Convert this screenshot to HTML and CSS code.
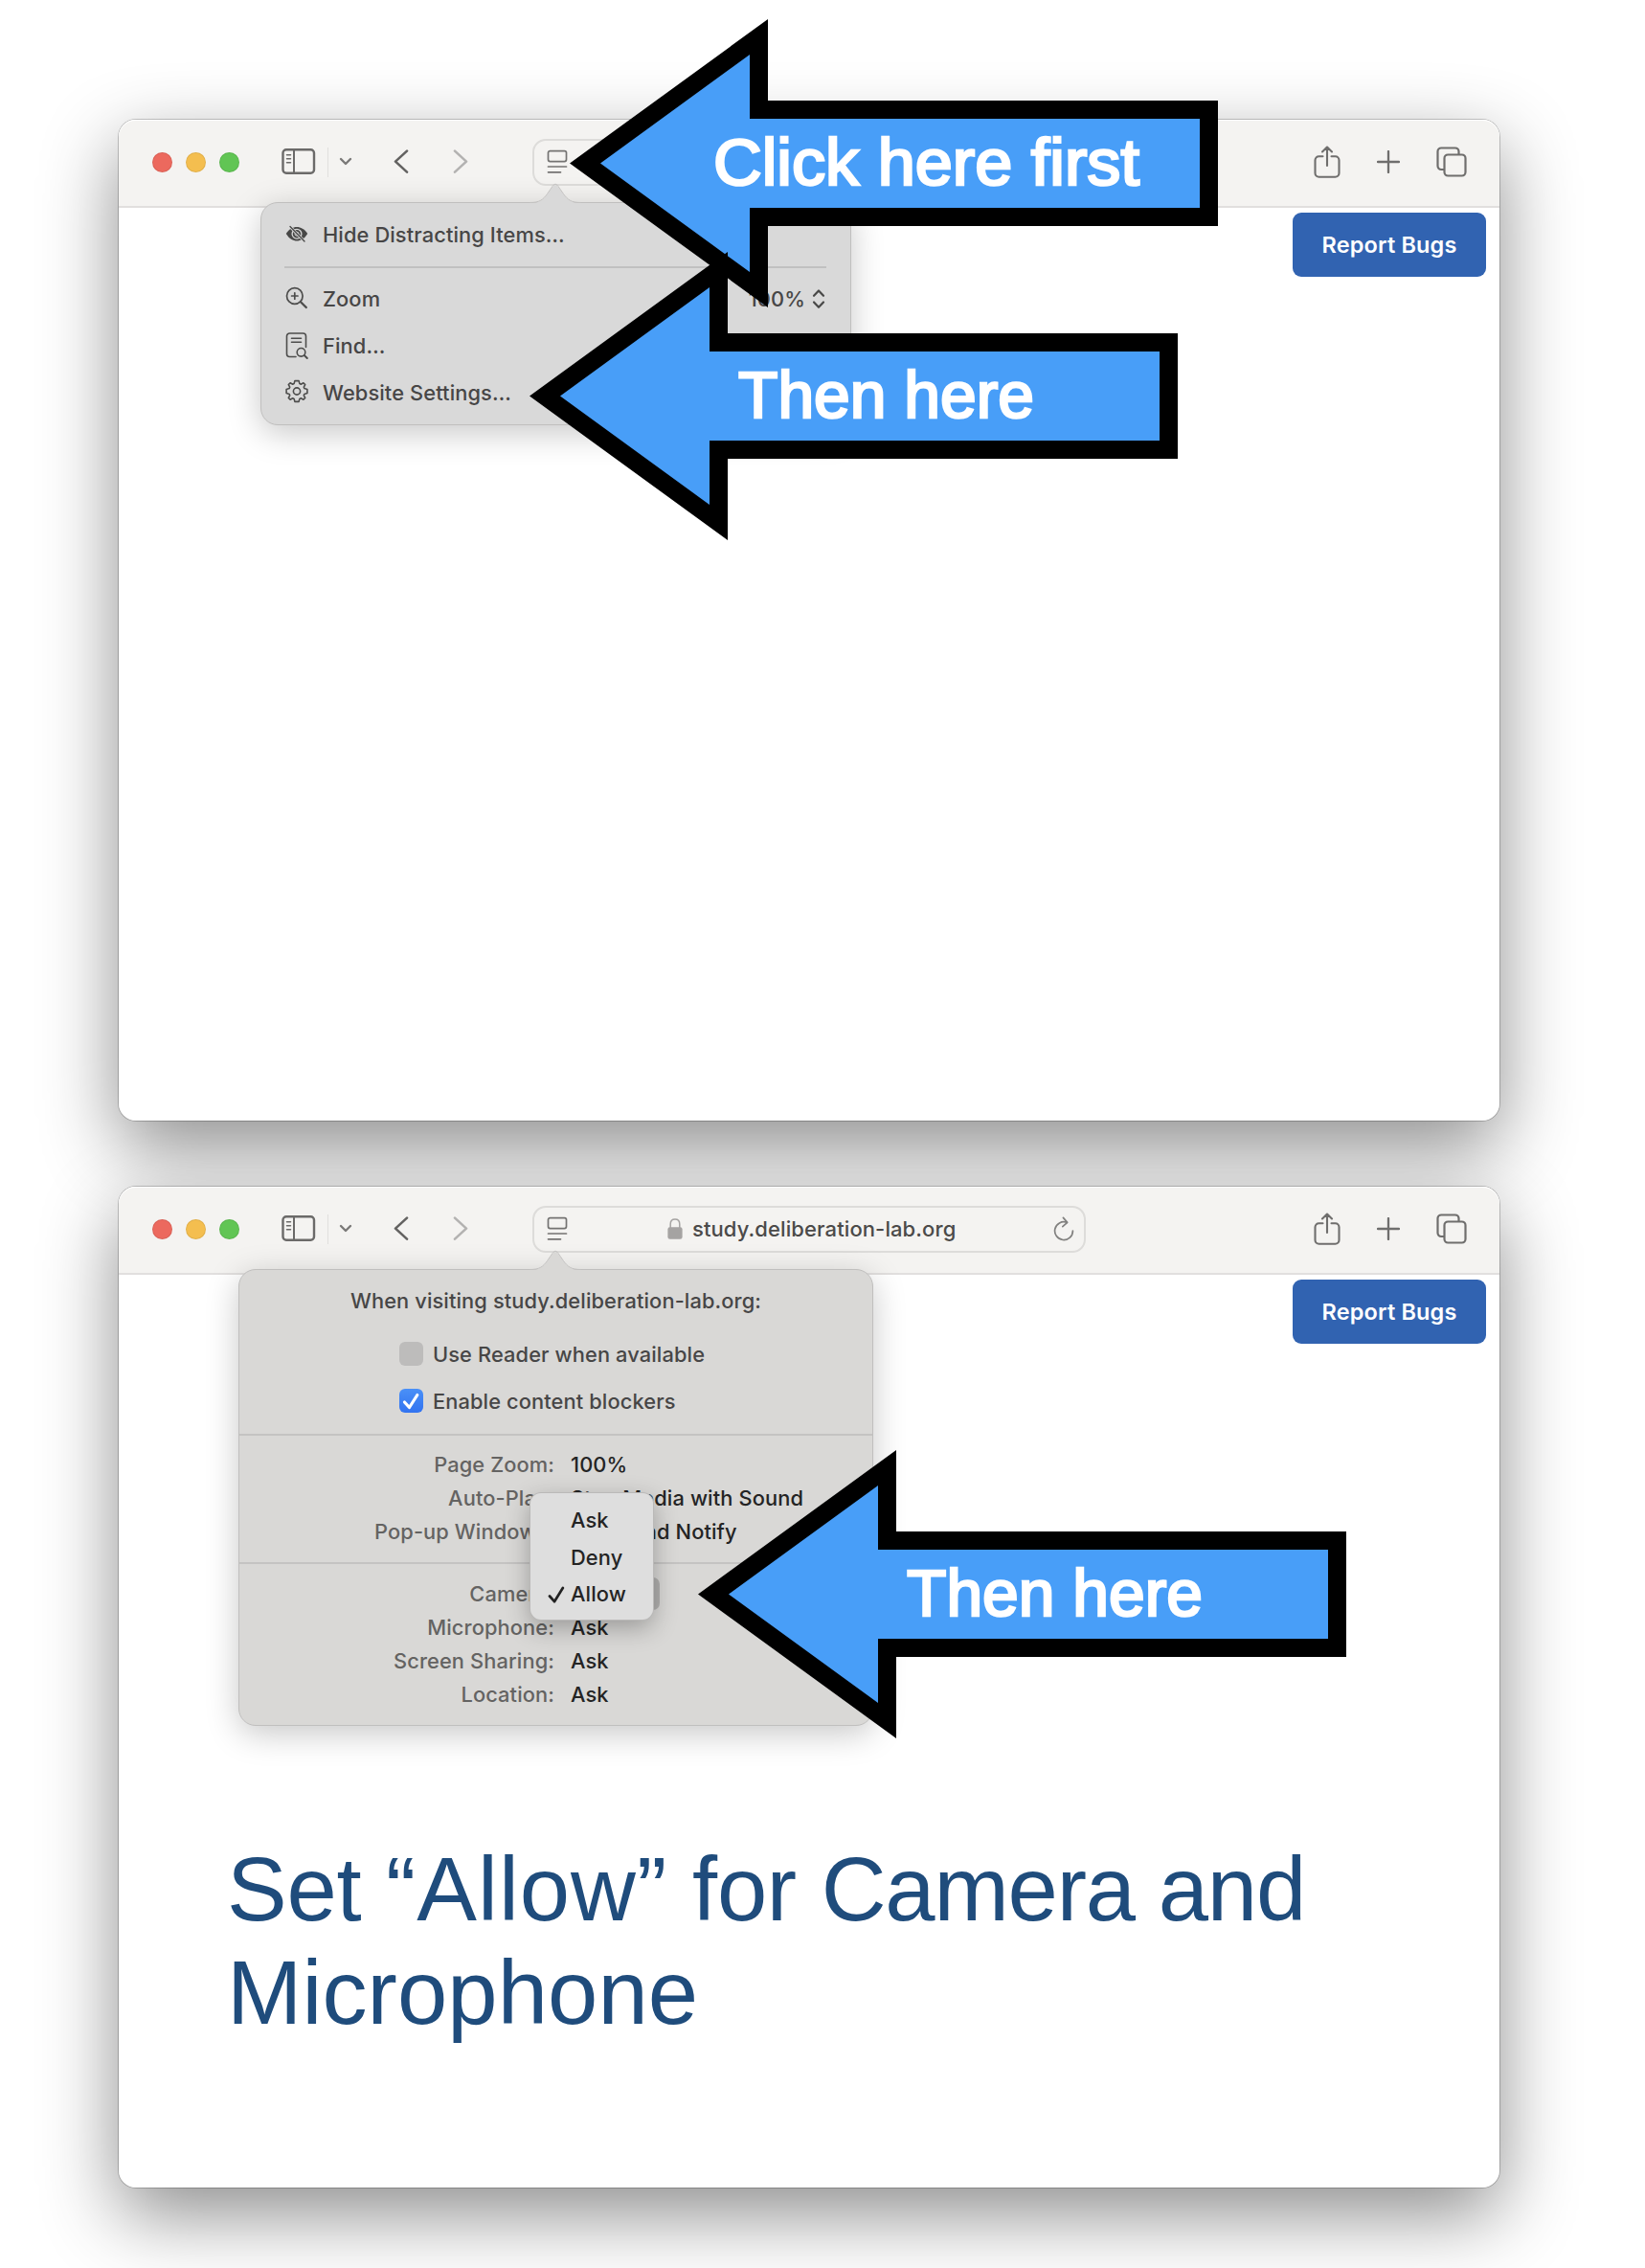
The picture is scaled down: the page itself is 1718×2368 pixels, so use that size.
FILE: index.html
```html
<!DOCTYPE html>
<html lang="en">
<head>
<meta charset="utf-8">
<title>Camera and microphone permissions</title>
<link rel="stylesheet" href="styles.css">
</head>
<body>
<svg class="defs" width="0" height="0" aria-hidden="true">
  <symbol id="sidebar" viewBox="0 0 36 28"><g fill="none" stroke="#6b6a69"><rect x="1.5" y="1.2" width="32.500" height="24.500" rx="3.5" stroke-width="2.4"/><path d="M13 2v24" stroke-width="2"/><path d="M5.500 6.800h4M5.500 10.800h4M5.500 14.800h4" stroke-width="1.500" stroke-linecap="round"/></g></symbol>
  <symbol id="down" viewBox="0 0 14 10"><path d="M2 2l5 5 5-5" fill="none" stroke="#7a7978" stroke-width="2.4" stroke-linecap="round" stroke-linejoin="round"/></symbol>
  <symbol id="back" viewBox="0 0 16 26"><path d="M14 1.6L2 12.600l12 11" fill="none" stroke="currentColor" stroke-width="2.6" stroke-linecap="round" stroke-linejoin="round"/></symbol>
  <symbol id="reader" viewBox="0 0 22 26"><g fill="none" stroke="#747372" stroke-width="1.7" stroke-linecap="round"><rect x="1.5" y="1.6" width="19" height="11" rx="2"/><path d="M1.5 18h19M1.5 23.800h13"/></g></symbol>
  <symbol id="lock" viewBox="0 0 16 22"><path d="M3.2 10V6.2C3.2 3 5.200 1 8 1s4.800 2 4.800 5.200V10" fill="none" stroke="#a5a3a2" stroke-width="1.500"/><rect x=".4" y="9.200" width="15.200" height="12.600" rx="2.300" fill="#a5a3a2"/></symbol>
  <symbol id="reload" viewBox="0 0 22 26"><g fill="none" stroke="#81807f" stroke-width="1.700" stroke-linecap="round" stroke-linejoin="round"><path d="M14.200 6.300A9.400 9.400 0 1 0 20.400 15"/><path d="M10.400 1.400l4.300 5-4.900 4.300"/></g></symbol>
  <symbol id="share" viewBox="0 0 28 34"><g fill="none" stroke="#6f6e6d" stroke-width="2.100" stroke-linecap="round" stroke-linejoin="round"><path d="M9.500 11.200H5.500a4 4 0 0 0-4 4v13.600a4 4 0 0 0 4 4h17a4 4 0 0 0 4-4V15.200a4 4 0 0 0-4-4h-4M14 21V1.600M9 6.500l5-5 5 5"/></g></symbol>
  <symbol id="plus" viewBox="0 0 24 24"><path d="M12 1v22M1 12h22" stroke="#6f6e6d" stroke-width="2.300" stroke-linecap="round"/></symbol>
  <symbol id="tabs" viewBox="0 0 32 32"><g fill="none" stroke="#6f6e6d" stroke-width="2.200"><path d="M8.500 24H5.200A3.700 3.700 0 0 1 1.500 20.300V5.200A3.700 3.700 0 0 1 5.200 1.500h14.600a3.700 3.700 0 0 1 3.700 3.700v3.300"/><rect x="8.500" y="8.500" width="22" height="22" rx="3.700"/></g></symbol>
  <symbol id="tail" viewBox="0 0 54 23"><path d="M0 22C11 22 14 19 18.500 13L23 6.500C26 2 28 2 31 6.500l4.500 6.500C40 19 43 22 54 22v1H0z" fill="var(--pop)"/><path d="M0 21.500C11 21.500 14 18.500 18.500 12.500L23 6C26 1 28 1 31 6l4.500 6.500C40 18.500 43 21.500 54 21.500" fill="none" stroke="#c3c2c1"/></symbol>
</svg>

<main class="page">
  <section class="window">
    <header class="toolbar">
      <div class="lights"><i class="red"></i><i class="yellow"></i><i class="green"></i></div>
      <svg class="i-sidebar"><use href="#sidebar"/></svg>
      <span class="sep"></span>
      <svg class="i-down"><use href="#down"/></svg>
      <svg class="i-back"><use href="#back"/></svg>
      <svg class="i-fwd"><use href="#back"/></svg>
      <div class="address"><svg class="i-reader"><use href="#reader"/></svg></div>
      <div class="actions">
        <svg class="i-share"><use href="#share"/></svg>
        <svg class="i-plus"><use href="#plus"/></svg>
        <svg class="i-tabs"><use href="#tabs"/></svg>
      </div>
    </header>
    <div class="content"><button class="report">Report Bugs</button></div>

    <div class="popover menu">
      <svg class="tail"><use href="#tail"/></svg>
      <div class="item">
        <svg class="glyph" viewBox="0 0 24 28"><path d="M.8 13C4 8 8 6 12 6s8 2 11.200 7C20 18.300 16 20.500 12 20.500S4 18.300.8 13z" fill="#484847"/><circle cx="12" cy="13.200" r="4.900" fill="none" stroke="#d9d9d9" stroke-width="1.300"/><circle cx="12" cy="13.200" r="2" fill="none" stroke="#d9d9d9"/><path d="M5.500 6.200l14 14.300" stroke="#d9d9d9" stroke-width="2.800"/><path d="M5 5.500l15 15.500" stroke="#484847" stroke-width="1.300" stroke-linecap="round"/></svg>
        <span>Hide Distracting Items…</span>
      </div>
      <hr>
      <div class="item">
        <svg class="glyph" viewBox="0 0 24 28"><g fill="none" stroke="#4d4d4c" stroke-width="1.700" stroke-linecap="round"><circle cx="9.800" cy="11" r="8.300"/><path d="M9.800 7.800v6.400M6.600 11H13"/><path d="M16 17.200l5.800 5.800" stroke-width="2.300"/></g></svg>
        <span>Zoom</span>
        <span class="pct">100%</span>
        <svg class="i-updown" viewBox="0 0 14 22"><path d="M2 7.800L7 2.500l5 5.300M2 14.500l5 5.300 5-5.300" fill="none" stroke="#484847" stroke-width="2.200" stroke-linecap="round" stroke-linejoin="round"/></svg>
      </div>
      <div class="item">
        <svg class="glyph" viewBox="0 0 24 28"><g fill="none" stroke="#4d4d4c" stroke-width="1.600" stroke-linecap="round"><path d="M11 25.500H4.500A3 3 0 0 1 1.500 22.500V4a3 3 0 0 1 3-3h14a3 3 0 0 1 3 3v11.500M6.500 6.200h10M6.500 10.200h10"/><circle cx="16.500" cy="20.800" r="4.300"/><path d="M19.800 24l3 3" stroke-width="1.900"/></g></svg>
        <span>Find…</span>
      </div>
      <div class="item">
        <svg class="glyph" viewBox="0 0 24 28"><g fill="none" stroke="#4d4d4c" stroke-width="1.600" stroke-linejoin="round" transform="translate(12 12.500)"><circle r="3.600"/><path d="M-2.100-10.900H2.100L2.900-7.900 4.300-7.300 6.900-8.700 8.700-6.900 7.300-4.300 7.900-2.900 10.900-2.100V2.100L7.900 2.900 7.300 4.300 8.700 6.900 6.900 8.700 4.300 7.300 2.900 7.900 2.100 10.900H-2.100L-2.900 7.900-4.300 7.300-6.900 8.700-8.700 6.900-7.300 4.300-7.900 2.900-10.900 2.100V-2.100L-7.900-2.900-7.300-4.300-8.700-6.900-6.900-8.700-4.300-7.300-2.900-7.900z"/></g></svg>
        <span>Website Settings…</span>
      </div>
    </div>
  </section>

  <section class="window">
    <header class="toolbar">
      <div class="lights"><i class="red"></i><i class="yellow"></i><i class="green"></i></div>
      <svg class="i-sidebar"><use href="#sidebar"/></svg>
      <span class="sep"></span>
      <svg class="i-down"><use href="#down"/></svg>
      <svg class="i-back"><use href="#back"/></svg>
      <svg class="i-fwd"><use href="#back"/></svg>
      <div class="address">
        <svg class="i-reader"><use href="#reader"/></svg>
        <div class="url"><svg class="i-lock"><use href="#lock"/></svg><span>study.deliberation-lab.org</span></div>
        <svg class="i-reload"><use href="#reload"/></svg>
      </div>
      <div class="actions">
        <svg class="i-share"><use href="#share"/></svg>
        <svg class="i-plus"><use href="#plus"/></svg>
        <svg class="i-tabs"><use href="#tabs"/></svg>
      </div>
    </header>
    <div class="content">
      <button class="report">Report Bugs</button>
      <h1>Set <span class="quoted">“Allow”</span> for <span class="tight">Camera and</span><br><span class="loose">Microphone</span></h1>
    </div>

    <div class="popover settings">
      <svg class="tail"><use href="#tail"/></svg>
      <div class="visiting">When visiting study.deliberation-lab.org:</div>
      <div class="check"><i class="box"></i><span>Use Reader when available</span></div>
      <div class="check"><i class="box on"><svg viewBox="0 0 25 25"><path d="M5.500 14l5 5.500L18.800 6.500" fill="none" stroke="#fff" stroke-width="3.200" stroke-linecap="round" stroke-linejoin="round"/></svg></i><span>Enable content blockers</span></div>
      <dl class="group">
        <dt>Page Zoom:</dt><dd>100%</dd>
        <dt>Auto-Play:</dt><dd>Stop Media with Sound</dd>
        <dt>Pop-up Windows:</dt><dd>Block and Notify</dd>
      </dl>
      <dl class="group">
        <dt>Camera:</dt><dd class="select"></dd>
        <dt>Microphone:</dt><dd>Ask</dd>
        <dt>Screen Sharing:</dt><dd>Ask</dd>
        <dt>Location:</dt><dd>Ask</dd>
      </dl>
      <div class="choices">
        <span>Ask</span>
        <span>Deny</span>
        <span><svg viewBox="0 0 18 18"><path d="M2 10.500l5 5.700L15.800 2" fill="none" stroke="#222" stroke-width="2.700" stroke-linecap="round" stroke-linejoin="round"/></svg>Allow</span>
      </div>
    </div>
  </section>

  <svg class="arrow first" viewBox="0 0 678 302"><path d="M0 150.500L207 0v85h470v131H207v85z"/><path class="fill" d="M32 150.500L188 37v67h470v93H188v67z"/><text x="150" y="172.500" textLength="445" lengthAdjust="spacingAndGlyphs">Click here first</text></svg>
  <svg class="arrow second" viewBox="0 0 678 302"><path d="M0 150.500L207 0v85h470v131H207v85z"/><path class="fill" d="M32 150.500L188 37v67h470v93H188v67z"/><text x="218" y="172.500" textLength="309" lengthAdjust="spacingAndGlyphs">Then here</text></svg>
  <svg class="arrow third" viewBox="0 0 678 302"><path d="M0 150.500L207 0v85h470v131H207v85z"/><path class="fill" d="M32 150.500L188 37v67h470v93H188v67z"/><text x="218" y="172.500" textLength="309" lengthAdjust="spacingAndGlyphs">Then here</text></svg>
</main>
</body>
</html>
```
FILE: styles.css
```css
* { box-sizing: border-box; }
body { margin: 0; background: #fff; font-family: Inter, "Liberation Sans", sans-serif; font-size: 21.8px; font-weight: 450; letter-spacing: .12px; }
.defs { position: absolute; }
svg { display: block; flex: none; }

.page {
  position: relative;
  isolation: isolate;
  width: 1718px;
  height: 2368px;
  padding: 125px 152px 0 124px;
  overflow: hidden;
  display: flex;
  flex-direction: column;
  gap: 69px;
}

/* Browser window */
.window { position: relative; height: 1045px; border-radius: 18px; background: #fff; box-shadow: 0 0 0 1px rgba(0, 0, 0, .2); }
.window::before { content: ""; position: absolute; z-index: -1; inset: 0; border-radius: 18px; box-shadow: 0 28px 80px rgba(0, 0, 0, .45); }
.toolbar {
  height: 92px;
  padding: 0 34px 2px 35px;
  display: flex;
  align-items: center;
  background: #f4f3f1;
  border-radius: 18px 18px 0 0;
  border-bottom: 2px solid #e1dfde;
  box-shadow: inset 0 1px #fff;
}
.lights { display: flex; gap: 14px; padding-top: 1px; }
.lights i { width: 21px; height: 21px; border-radius: 50%; box-shadow: inset 0 0 0 1px rgba(0, 0, 0, .08); }
.red { background: #ec695e; }
.yellow { background: #f4be4f; }
.green { background: #61c554; }
.i-sidebar { width: 36px; height: 28px; margin-left: 44px; }
.sep { width: 1px; height: 31px; margin-left: 12px; background: #e0dfdd; }
.i-down { width: 14px; height: 10px; margin-left: 11px; }
.i-back { width: 16px; height: 26px; margin-left: 43px; color: #636261; }
.i-fwd { width: 16px; height: 26px; margin-left: 46px; color: #b3b2b1; transform: scaleX(-1); }
.address {
  width: 578px;
  height: 49px;
  margin-left: 67px;
  padding: 0 10px 0 13px;
  display: flex;
  align-items: center;
  border: 2px solid #dddcda;
  border-radius: 14px;
}
.i-reader { width: 22px; height: 26px; }
.url { flex: 1; display: flex; align-items: center; gap: 10px; padding-left: 104px; color: #4b4a49; font-size: 22px; letter-spacing: .1px; }
.i-lock { width: 16px; height: 22px; }
.i-reload { width: 22px; height: 26px; }
.actions { display: flex; align-items: center; margin-left: auto; }
.i-share { width: 28px; height: 34px; }
.i-plus { width: 24px; height: 24px; margin-left: 38px; }
.i-tabs { width: 32px; height: 32px; margin-left: 38px; }

.content { padding: 5px 14px 0 113px; }
.report {
  display: block;
  width: 202px;
  height: 67px;
  margin-left: auto;
  padding: 0;
  border: 0;
  border-radius: 9px;
  background: #3163b1;
  color: #fff;
  font: 600 23.500px Inter, sans-serif;
  letter-spacing: .15px;
}
h1 { margin: 516px 0 0; color: #1f4c7c; font: 400 94px/108px "Liberation Sans", sans-serif; letter-spacing: -.3px; white-space: nowrap; }
.quoted { letter-spacing: 1px; }
.tight { letter-spacing: -1.200px; }
.loose { letter-spacing: .1px; }

/* Popovers */
.popover {
  --pop: #d9d9d9;
  position: absolute;
  top: 86px;
  background: var(--pop);
  border: 1px solid #c0bfbe;
  border-radius: 18px;
  box-shadow: 0 8px 34px rgba(0, 0, 0, .22);
  color: #474646;
}
.tail { position: absolute; top: -22px; width: 54px; height: 23px; }
.menu { left: 148px; width: 617px; height: 233px; padding: 9px 25px 0 24px; }
.menu .tail { left: 280px; }
.item { height: 49px; padding-bottom: 1px; display: flex; align-items: center; }
.item .glyph { width: 24px; height: 28px; margin-right: 15px; margin-left: 1px; }
.menu hr { height: 2px; margin: 8px 0 8px; border: 0; background: #c0c0c0; }
.pct { margin-left: auto; margin-right: 7px; }
.i-updown { width: 14px; height: 22px; margin-right: 1px; }

.settings { --pop: #d9d8d6; left: 125px; width: 663px; height: 477px; }
.settings .tail { left: 303px; }
.visiting { height: 63px; line-height: 64px; text-align: center; }
.check { height: 49px; padding-left: 167px; display: flex; align-items: center; gap: 10px; }
.box { width: 25px; height: 25px; border-radius: 6px; background: #bdbcbb; }
.box.on { background: linear-gradient(#4a90f7, #3273f0); }
.group { display: grid; grid-template-columns: 329px 1fr; column-gap: 17px; grid-auto-rows: 35px; align-items: center; margin: 0; padding: 12px 0 15px; border-top: 2px solid #c4c3c2; }
.check + .group { margin-top: 10px; }
.group + .group { padding-top: 13px; }
dt { text-align: right; color: #646362; }
dd { margin: 0; color: #242424; }
.select { width: 93px; height: 34px; background: #b1b0af; border-radius: 7px; }
.choices {
  position: absolute;
  left: 304px;
  top: 233px;
  width: 128px;
  height: 132px;
  padding: 9px 0 0 42px;
  background: #dedede;
  border-radius: 11px;
  box-shadow: 0 0 0 1px #bab9b8, 0 8px 26px rgba(0, 0, 0, .3);
  color: #242424;
}
.choices span { position: relative; display: block; height: 38.500px; line-height: 38.500px; }
.choices svg { position: absolute; left: -24px; top: 11px; width: 18px; height: 18px; }

/* Callout arrows */
.arrow { position: absolute; width: 678px; height: 302px; }
.arrow .fill { fill: #489ef8; }
.arrow text { fill: #fff; stroke: #fff; stroke-width: 2.600px; font: 400 68.500px "Liberation Sans", sans-serif; letter-spacing: 0; }
.first { left: 595px; top: 20px; }
.second { left: 553px; top: 263px; }
.third { left: 729px; top: 1514px; }
```
